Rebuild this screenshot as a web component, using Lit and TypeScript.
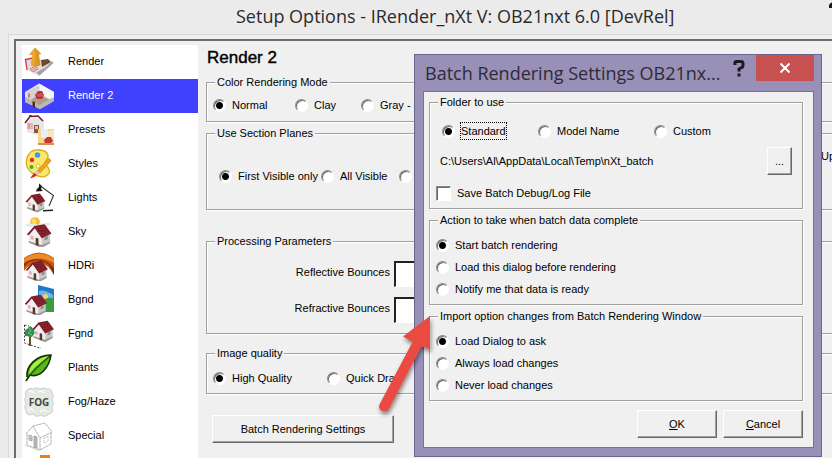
import { LitElement, html, svg, css, TemplateResult } from "lit";
import { customElement, property } from "lit/decorators.js";
import { classMap } from "lit/directives/class-map.js";

const house = (transform: string) => svg`
  <g transform=${transform}>
    <path d="M4 15 L10 8 L18 18 V28.5 L4 24Z" fill="#f1eeee"/>
    <path d="M18 18 L27 14.500 V24 L18 28.500Z" fill="#c9c9ca"/>
    <path d="M4 22.500 L18 27 L27 23 V25 L18 30 L4 24.500Z" fill="#9d9b99"/>
    <path d="M10 6.500 L21 4.500 L28.500 14.500 L18 19.500 L10.500 9 L4 16.500 L2 15.500Z" fill="#7c1a24"/>
    <path d="M12 8 L23 7 M13.500 10.500 L25 9.500 M15.500 13.500 L26.500 12.500 M17 16.500 L27 14.500" stroke="#a63a42" stroke-width="0.800" stroke-dasharray="1.500 1"/>
    <path d="M11.500 19 L14.500 20 V28 L11.500 27Z" fill="#5a3820"/>
    <path d="M6 16.500 L9 17.500 V21.500 L6 20.500Z" fill="#e8a9ac"/>
    <path d="M21 18.500 L24.500 17 V20.500 L21 22Z" fill="#8b8b90"/>
  </g>`;

const icons: Record<string, TemplateResult> = {
  render: svg`
    <path d="M1 13 L10 11 L29 16 L15 29 L3 23Z" fill="#dedcdc"/>
    <path d="M3 23 L1.500 12.500 L9 11" fill="none" stroke="#d8323c" stroke-width="1.300"/>
    <path d="M17 13 L24 12 L27 15 L18 20Z" fill="#6c4a2c"/>
    <path d="M28 14 L29.500 16 L15.500 28.500 L12.500 25.500 L22 20Z" fill="#a3a3a3"/>
    <path d="M6 22 L11 19 L14 22 L9 25Z" fill="#f3a7ae" stroke="#c9434e" stroke-width="0.800" stroke-dasharray="1.500 1"/>
    <path d="M11 0.500 L17.500 7 L15 7.500 L16.500 18 Q12 21 7 18 L8.500 8 L5 8Z" fill="#dd9620"/>
    <path d="M11 0.500 L11.500 8 L10.500 19 Q9 19 7 18 L8.500 8 L5 8Z" fill="#e8a633"/>`,
  render2: svg`
    <path d="M1 11 L15 2.500 L30 11 V20 L16 28 L1 21Z" fill="#e3e2e2"/>
    <path d="M15 2.500 L30 11 V20 L17 13Z" fill="#f6f6f6"/>
    <path d="M3 11 L15 4.500 V13 L4 19Z" fill="#d4d2d2"/>
    <path d="M5 20 L15 13 L26 19 L16 25Z" fill="#b39b86"/>
    <path d="M1 16 L10 20 L15 24 L30 16 V20 L16 28 L1 21Z" fill="#b9b8b8"/>
    <path d="M8.500 20 L11 21 V27 L8.500 25.500Z" fill="#4a2c18"/>
    <path d="M11 14 L14 10 H18 L20 14 L18 18 H13Z" fill="#b5323a"/>
    <path d="M12 13.500 L18 12 L20 15 L14 16Z" fill="#cf5358"/>
    <path d="M4 13 L6 12 V16 L4 17Z" fill="#d87c83"/>`,
  presets: svg`
    <path d="M3 7 L9 2 L20 5 V17 L12 20 L3 17Z" fill="#e6e6e6"/>
    <path d="M1 8 L6 1.500 L14 1 L19 6" fill="none" stroke="#76202a" stroke-width="1.600"/>
    <path d="M5 2 V0 H8 V1Z" fill="#4b4b4b"/>
    <path d="M3 9 H9 M3 11 H9 M3 13 H9 M5 8 V14" stroke="#db7a83" stroke-width="0.900"/>
    <path d="M10 10 H15 V18 H10Z" fill="#8a5a34"/>
    <path d="M11 11 H14 V14 H11Z" fill="#d9c7b0"/>
    <path d="M14 14 H30 V30 H14Z" fill="#f6d68a"/>
    <path d="M17 14 H24 V23 H17Z" fill="#e6eef3"/>
    <path d="M24 16 L30 15 V25 H24Z" fill="#f9e6b8"/>
    <path d="M20 25 L23 22 H27 L29 26 L26 29 H21Z" fill="#c7372f"/>
    <path d="M14 28 H30 V30 H14Z" fill="#dc8a5c"/>`,
  styles: svg`
    <path d="M5 5 C9 -1 22 0 24 6 C25 10 20 12 21 15 C23 18 27 19 25 24 C22 30 13 28 8 24 C1 19 1 10 5 5Z" fill="#fbe76a" stroke="#dfa90f" stroke-width="1.300"/>
    <circle cx="13.500" cy="6" r="2.800" fill="#3a9cec"/>
    <circle cx="8" cy="11" r="2.200" fill="#e8262a"/>
    <circle cx="7.500" cy="18" r="2" fill="#35ad39"/>
    <circle cx="14" cy="17" r="2" fill="#fff" stroke="#dfa90f" stroke-width="0.800"/>
    <path d="M13 22 L25 9 L27 12 L16 24Z" fill="#f0a31c" stroke="#b87410" stroke-width="0.500"/>
    <path d="M10 24 L13 21.500 L16 24 L13 26Z" fill="#c9c9d4"/>
    <path d="M6 29.500 L10 24 L13 26 Q10 29 6 29.500Z" fill="#d92525"/>`,
  lights: svg`
    ${house("translate(0 7) scale(0.750)")}
    <path d="M15 0.500 L18 3 L17 6 L19 8 L12 8.500 Q12 6 15 4Z" fill="#171717"/>
    <path d="M17 3.500 L29.500 12.500 L25 23" fill="none" stroke="#33363c" stroke-width="1.100"/>
    <path d="M19 27 L29 26.500 V28 L19 28.500Z" fill="#222"/>`,
  sky: svg`
    <circle cx="11" cy="5" r="4.800" fill="#f8b62b"/>
    <circle cx="10" cy="4" r="2.500" fill="#ffdc67"/>
    <path d="M1 8 Q3 5 7 7 Q11 5 14 8 L20 6 Q26 5 27 8 Q20 11 12 10 Q5 11 1 8Z" fill="#e6e9ec"/>
    ${house("translate(1 3) scale(0.930)")}`,
  hdri: svg`
    <path d="M0 7 Q15 -4 30 7 V24 Q22 10 14 14 Q6 11 0 20Z" fill="#c95613"/>
    <path d="M0 8 Q15 -3 30 8 L30 12 Q15 3 0 12Z" fill="#ee8a25"/>
    <path d="M0 16 Q3 10 9 10 Q17 8 25 14 L30 24 V17 Q20 6 7 9 Q2 10 0 13Z" fill="#7e2f10"/>
    ${house("translate(0 6) scale(0.840)")}`,
  bgnd: svg`
    <path d="M14 0 L30 4 V21 L14 17Z" fill="#2277c8"/>
    <path d="M15 6 Q21 4 29 10 V14 L15 11Z" fill="#69b5ec"/>
    <circle cx="21.500" cy="11.500" r="2.500" fill="#ffd14c"/>
    <path d="M20 20 Q20 13 25 13 Q30 12 30 16 V27 H21Z" fill="#3b9c3f"/>
    ${house("translate(-1 6) scale(0.840)")}`,
  fgnd: svg`
    ${house("translate(6 -2) scale(0.840)")}
    <path d="M0.500 6 V24 L17 29.500 M0.500 6 L5 7" fill="none" stroke="#2c2c2c" stroke-width="0.900" stroke-dasharray="2 1.500"/>
    <path d="M5 17 H7 V27 H5Z" fill="#704c25"/>
    <path d="M6 7 Q9 8 9 11 Q12 13 9.500 16 Q7 20 4 17 Q0 18 1 14 Q0 11 3 10Z" fill="#2f8d4d"/>
    <path d="M5 9 L7 12 L4 14 L8 16" fill="none" stroke="#7cc893" stroke-width="0.900"/>`,
  plants: svg`
    <path d="M3 24 C2 13 12 2 27 2 C25 15 16 25 6 22 L2 28" fill="#57b81a" stroke="#16270c" stroke-width="1.600"/>
    <path d="M5 21 C5 13 13 5 25 3 C19 8 11 13 5 21Z" fill="#a6ef42"/>
    <path d="M2 28 C8 18 16 11 26 3" fill="none" stroke="#1f4b0c" stroke-width="1.100"/>`,
  fog: svg`
    <path d="M3 3 Q6 0 9 2 Q12 -1 16 2 Q20 0 23 2 Q28 1 28 6 Q31 9 28 13 Q31 17 28 20 Q30 26 25 27 Q21 31 17 28 Q12 31 9 27 Q3 30 2 24 Q-1 20 2 17 Q-1 12 2 9 Q0 5 3 3Z" fill="#e4e9e1" stroke="#cbd1c9"/>
    <path d="M5 5 Q8 3 10 6 M14 5 Q17 3 20 6 M4 24 Q7 20 10 24 M16 25 Q19 21 23 25" fill="none" stroke="#f9fbf8" stroke-width="1.500"/>
    <text class="fog" x="15" y="19" text-anchor="middle">FOG</text>`,
  special: svg`
    <g fill="none" stroke="#9a9a9a" stroke-width="0.800">
      <path d="M2 13 L9 5 L16 17 L28 11 L21 2 L9 5 M3 13 V24 L16 29 V17 M16 29 L27 23 V12" stroke-dasharray="3 0.500"/>
      <path d="M10 15 L13 16 V27 L10 26Z" fill="#b9b9b9"/>
      <path d="M5 14 L8 15 V20 L5 19Z M5 17 L8 18" fill="#dadada"/>
      <path d="M20 17 L24 15 V20 L20 22Z" stroke-dasharray="1 1"/>
      <path d="M1 24 L15 30" stroke-dasharray="1 1.500"/>
    </g>`,
  more: svg`<path d="M16 0 H26 V12 H16Z" fill="#ef7d17"/>`,
};

const controls = css`
  * { box-sizing: border-box; }
  fieldset {
    margin: 0;
    padding: 0;
    min-width: 0;
    border: 1px solid #a0a0a0;
    box-shadow: 1px 1px 0 #fff, inset 1px 1px 0 #fff;
  }
  legend {
    margin-left: 8px;
    padding: 0 2px;
    height: 14px;
    line-height: 14px;
    background: #f0f0f0;
  }
  button {
    margin: 0;
    padding: 0;
    font: inherit;
    color: inherit;
    white-space: nowrap;
  }
  .push {
    height: 28px;
    background: #f0f0f0;
    border: 1px solid;
    border-color: #fff #696969 #696969 #fff;
    box-shadow: inset -1px -1px 0 #a0a0a0;
  }
`;

@customElement("option-choice")
class OptionChoice extends LitElement {
  @property() label = "";
  @property() group = "";
  @property() type = "radio";
  @property({ type: Boolean }) checked = false;
  @property({ type: Boolean }) focused = false;

  static styles = css`
    :host { display: block; }
    label {
      display: flex;
      align-items: center;
      gap: 6px;
      min-height: 16px;
      line-height: 16px;
      white-space: nowrap;
    }
    input {
      appearance: none;
      flex: none;
      margin: 0;
      width: 13px;
      height: 13px;
      background: #fff;
      border: 1px solid;
      border-color: #8a8a8a #fff #fff #8a8a8a;
      box-shadow: inset 1px 1px 0 #696969;
    }
    .radio { border-radius: 50%; }
    .radio:checked { background: radial-gradient(circle, #000 0 3px, #fff 4px); }
    .checkbox { box-sizing: border-box; width: 15px; height: 15px; }
    .checkbox:checked { background: #000; }
    .focused { outline: 1px dotted #000; }
  `;

  render() {
    return html`<label>
      <input class=${this.type} type=${this.type} name=${this.group} .checked=${this.checked}>
      <span class=${classMap({ focused: this.focused })}>${this.label}</span>
    </label>`;
  }
}

@customElement("page-list")
class PageList extends LitElement {
  private pages: [string, string][] = [
    ["render", "Render"], ["render2", "Render 2"], ["presets", "Presets"],
    ["styles", "Styles"], ["lights", "Lights"], ["sky", "Sky"],
    ["hdri", "HDRi"], ["bgnd", "Bgnd"], ["fgnd", "Fgnd"],
    ["plants", "Plants"], ["fog", "Fog/Haze"], ["special", "Special"], ["more", ""],
  ];

  static styles = css`
    :host { display: block; background: #fff; overflow: hidden; }
    .item {
      display: flex;
      align-items: center;
      gap: 14px;
      width: 100%;
      height: 34px;
      margin: 0;
      padding: 0 2px 2px;
      border: 0;
      background: none;
      font: inherit;
      color: #000;
      text-align: left;
    }
    .current { background: #4040ff; color: #fff; }
    svg { width: 30px; height: 30px; margin-top: 2px; flex: none; }
    .fog { font: bold 10px "Open Sans", sans-serif; fill: #454a45; }
  `;

  render() {
    return html`<nav>${this.pages.map(([icon, name]) => html`
      <button class=${classMap({ item: true, current: icon === "render2" })} aria-label=${name || "More"}>
        <svg viewBox="0 0 30 30" aria-hidden="true">${icons[icon]}</svg>${name}
      </button>`)}</nav>`;
  }
}

@customElement("batch-dialog")
class BatchDialog extends LitElement {
  static styles = [controls, css`
    :host {
      display: block;
      background: #9890b6;
      border: 1px solid #6c6590;
      padding: 0 7px 8px 8px;
    }
    header { display: flex; align-items: flex-start; height: 36px; }
    h2 {
      flex: 1;
      margin: 0;
      padding-left: 2px;
      font: 18px/36px "Open Sans", sans-serif;
      color: #2e2b38;
      white-space: nowrap;
    }
    .help {
      width: 18px;
      height: 26px;
      margin-right: 8px;
      border: 0;
      background: none;
    }
    .close { width: 58px; height: 26px; border: 0; background: #c75050; }
    .help svg, .close svg { display: block; margin: auto; }
    .body {
      display: flex;
      flex-direction: column;
      gap: 4px;
      padding: 3px 10px 9px 5px;
      background: #f0f0f0;
      border: 1px solid #766f9c;
    }
    .where { display: grid; grid-template-columns: 96px 116px auto; padding: 14px 0 0 12px; }
    .path { display: flex; justify-content: space-between; align-items: center; margin-top: 8px; padding: 0 10px; }
    .browse { width: 25px; }
    .log { padding: 10px 0 7px 6px; }
    .stack { display: grid; gap: 6px; padding: 10px 0 7px 6px; }
    footer { display: flex; justify-content: flex-end; gap: 6px; margin-top: 5px; }
    footer .push { width: 80px; }
    .arrow { position: absolute; left: -50px; top: 250px; pointer-events: none; }
  `];

  render() {
    return html`
      <header>
        <h2>Batch Rendering Settings OB21nx...</h2>
        <button class="help" aria-label="Help">
          <svg width="14" height="26" viewBox="0 0 14 26"><path d="M3 10 V7.500 Q3 6.500 4.500 6.500 H9 Q11 6.500 11 8.500 V10.500 Q11 12 9.500 12.500 L7 14 V16.500" fill="none" stroke="#1c1a22" stroke-width="3"/><path d="M5.500 18.500 H8.500 V21.500 H5.500Z" fill="#1c1a22"/></svg>
        </button>
        <button class="close" aria-label="Close">
          <svg width="12" height="12" viewBox="0 0 12 12"><path d="M1.500 1.500 L10.500 10.500 M10.500 1.500 L1.500 10.500" stroke="#fff" stroke-width="2"/></svg>
        </button>
      </header>
      <div class="body">
        <fieldset>
          <legend>Folder to use</legend>
          <div class="where">
            <option-choice label="Standard" group="folder" checked focused></option-choice>
            <option-choice label="Model Name" group="folder"></option-choice>
            <option-choice label="Custom" group="folder"></option-choice>
          </div>
          <div class="path">
            <span>C:\\Users\\Al\\AppData\\Local\\Temp\\nXt_batch</span>
            <button class="push browse" aria-label="Browse">...</button>
          </div>
          <option-choice class="log" type="checkbox" label="Save Batch Debug/Log File"></option-choice>
        </fieldset>
        <fieldset>
          <legend>Action to take when batch data complete</legend>
          <div class="stack">
            <option-choice label="Start batch rendering" group="action" checked></option-choice>
            <option-choice label="Load this dialog before rendering" group="action"></option-choice>
            <option-choice label="Notify me that data is ready" group="action"></option-choice>
          </div>
        </fieldset>
        <fieldset>
          <legend>Import option changes from Batch Rendering Window</legend>
          <div class="stack">
            <option-choice label="Load Dialog to ask" group="import" checked></option-choice>
            <option-choice label="Always load changes" group="import"></option-choice>
            <option-choice label="Never load changes" group="import"></option-choice>
          </div>
        </fieldset>
        <footer>
          <button class="push"><u>O</u>K</button>
          <button class="push"><u>C</u>ancel</button>
        </footer>
      </div>
      <svg class="arrow" width="80" height="120" viewBox="0 0 80 120">
        <defs><filter id="shade" x="-20%" y="-20%" width="150%" height="150%"><feDropShadow dx="1" dy="3" stdDeviation="2" flood-color="#000" flood-opacity="0.450"/></filter></defs>
        <path filter="url(#shade)" d="M65 11 L38 31.500 L47.500 37 L14.500 99.500 Q13 104 17 106 Q21.500 108 24 104 L56.500 41 L65 44.500Z" fill="#e94b43"/>
      </svg>`;
  }
}

@customElement("app-root")
class AppRoot extends LitElement {
  static styles = [controls, css`
    :host {
      display: flex;
      flex-direction: column;
      position: relative;
      height: 100vh;
      overflow: hidden;
      background: #ebebeb;
      color: #000;
      font: 11px/14px "Liberation Sans", Arial, sans-serif;
    }
    .title { display: flex; justify-content: space-between; height: 34px; flex: none; padding-left: 236px; }
    h1 { margin: 0; font: 18px/32px "Open Sans", sans-serif; color: #2b2b2b; white-space: nowrap; }
    .help { width: 3px; height: 12px; border: 0; background: none; overflow: hidden; }
    .help svg { display: block; }
    .client {
      flex: 1;
      display: flex;
      min-height: 0;
      margin-left: 8px;
      padding: 4px 0 0 5px;
      background: #f0f0f0;
      border: solid #d9d9d9;
      border-width: 1px 0 0 1px;
    }
    .panel {
      flex: 1;
      display: flex;
      min-width: 0;
      padding: 4px 0 0 6px;
      border: solid #6c6c6c;
      border-width: 2px 0 0 2px;
    }
    page-list { width: 176px; flex: none; }
    main { flex: 1; min-width: 0; padding: 3px 0 0 8px; margin-right: -8px; }
    h3 { margin: 0 0 7px; padding-left: 1px; font-size: 17px; line-height: 20px; font-weight: 400; -webkit-text-stroke: 0.400px #000; }
    .row { display: grid; }
    .color { grid-template-columns: 82px 66px auto; padding: 8px 0 8px 6px; }
    .section { margin-top: 4px; }
    .update { text-align: right; padding: 9px 4px 0 0; }
    .planes { grid-template-columns: 102px 78px auto; padding: 5px 0 25px 12px; }
    .process { margin-top: 24px; }
    .fields { display: grid; gap: 10px; padding: 13px 0 10px; }
    .field { display: grid; grid-template-columns: 183px 90px; gap: 4px; align-items: center; }
    .field label { text-align: right; padding-bottom: 4px; }
    .field input {
      height: 26px;
      background: #fff;
      border: solid;
      border-width: 2px 1px 1px 2px;
      border-color: #222 #fff #fff #222;
      font: inherit;
    }
    .quality { margin-top: 12px; }
    .speed { grid-template-columns: 114px auto; padding: 10px 0 7px 6px; }
    .batch { display: block; width: 182px; margin: 21px 0 0 6px; }
    batch-dialog { position: absolute; top: 54px; right: 10px; width: 408px; }
  `];

  render() {
    return html`
      <div class="title">
        <h1>Setup Options - IRender_nXt V: OB21nxt 6.0 [DevRel]</h1>
        <button class="help" aria-label="Help">
          <svg width="12" height="12" viewBox="0 0 12 12"><path d="M1.500 8 V5.500 Q2 4 4 4 H8" fill="none" stroke="#1c1c1c" stroke-width="3"/></svg>
        </button>
      </div>
      <div class="client"><div class="panel">
        <page-list></page-list>
        <main>
          <h3>Render 2</h3>
          <fieldset>
            <legend>Color Rendering Mode</legend>
            <div class="row color">
              <option-choice label="Normal" group="color" checked></option-choice>
              <option-choice label="Clay" group="color"></option-choice>
              <option-choice label="Gray - M" group="color"></option-choice>
            </div>
          </fieldset>
          <fieldset class="section">
            <legend>Use Section Planes</legend>
            <div class="update">Up</div>
            <div class="row planes">
              <option-choice label="First Visible only" group="planes" checked></option-choice>
              <option-choice label="All Visible" group="planes"></option-choice>
              <option-choice group="planes"></option-choice>
            </div>
          </fieldset>
          <fieldset class="process">
            <legend>Processing Parameters</legend>
            <div class="fields">
              <div class="field"><label for="reflective">Reflective Bounces</label><input id="reflective" type="text"></div>
              <div class="field"><label for="refractive">Refractive Bounces</label><input id="refractive" type="text"></div>
            </div>
          </fieldset>
          <fieldset class="quality">
            <legend>Image quality</legend>
            <div class="row speed">
              <option-choice label="High Quality" group="quality" checked></option-choice>
              <option-choice label="Quick Draft" group="quality"></option-choice>
            </div>
          </fieldset>
          <button class="push batch">Batch Rendering Settings</button>
        </main>
      </div></div>
      <batch-dialog></batch-dialog>`;
  }
}
